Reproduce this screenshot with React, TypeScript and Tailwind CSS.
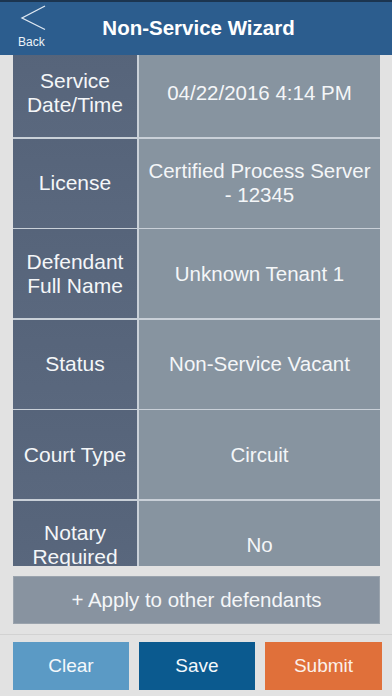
import React from "react";

type Row = { label: string[]; value: string[] };

const rows: Row[] = [
  { label: ["Service", "Date/Time"], value: ["04/22/2016 4:14 PM"] },
  { label: ["License"], value: ["Certified Process Server", "- 12345"] },
  { label: ["Defendant", "Full Name"], value: ["Unknown Tenant 1"] },
  { label: ["Status"], value: ["Non-Service Vacant"] },
  { label: ["Court Type"], value: ["Circuit"] },
  { label: ["Notary", "Required"], value: ["No"] },
];

export default function App() {
  return (
    <div
      className="w-[392px] h-[696px] flex flex-col bg-[#e2e2e2] overflow-hidden text-[#f4f6f8]"
      style={{ fontFamily: '"Liberation Sans", Arial, sans-serif' }}
    >
      {/* header */}
      <div className="h-[55px] shrink-0 bg-[#2c5d8e] border-t-2 border-[#1c3550] flex items-center relative">
        <div className="absolute left-[18px] top-[3px] flex flex-col items-start">
          <svg width="28" height="26" viewBox="0 0 28 26" className="ml-[1px]">
            <path d="M26 1 L3 13 L26 24.5" fill="none" stroke="#dfe8f2" strokeWidth="1.3" />
          </svg>
          <span className="text-[12px] leading-[14px] mt-[4px] text-[#eef3f8]">Back</span>
        </div>
        <div className="w-full text-center text-[20.5px] font-bold pl-[5px] mt-[-1px] text-white">
          Non-Service Wizard
        </div>
      </div>

      {/* scroll area */}
      <div className="h-[511px] shrink-0 overflow-hidden pl-[13px] pr-[12px]">
        <div className="-mt-[7px] flex flex-col gap-[1.5px] bg-[#c9d0d8]">
          {rows.map((r, i) => (
            <div key={i} className="flex h-[89px] gap-[2px]">
              <div className="w-[124px] shrink-0 bg-gradient-to-b from-[#56647a] to-[#5a687e] flex flex-col items-center justify-center text-[21px] leading-[24px] text-center">
                {r.label.map((l) => (
                  <span key={l}>{l}</span>
                ))}
              </div>
              <div className="flex-1 bg-[#8794a0] flex flex-col items-center justify-center text-[20.5px] leading-[24px] text-center">
                {r.value.map((v) => (
                  <span key={v}>{v}</span>
                ))}
              </div>
            </div>
          ))}
        </div>
      </div>

      {/* apply */}
      <div className="pl-[13px] pr-[12px] pt-[10px] pb-[10px] border-b border-[#d2d2d2]">
        <div className="h-[48px] bg-[#8893a0] flex items-center justify-center text-[20.5px] border border-[#9aa3ad]">
          + Apply to other defendants
        </div>
      </div>

      {/* footer */}
      <div className="flex gap-[10px] pl-[13px] pr-[10px] pt-[7px]">
        <button className="w-[116px] h-[48px] bg-[#5b9ac5] text-[19px] text-[#f4f8fb]">Clear</button>
        <button className="w-[116px] h-[48px] bg-[#0b5a8f] text-[19px] text-[#f4f8fb]">Save</button>
        <button className="flex-1 h-[48px] bg-[#e0703a] text-[19px] text-[#fbf1ea]">Submit</button>
      </div>
    </div>
  );
}
